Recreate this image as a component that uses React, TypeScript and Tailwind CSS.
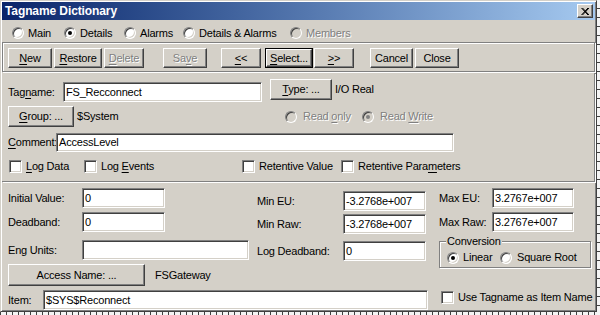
import React from "react";

type Kids = { children?: React.ReactNode };

const raised =
  "border border-t-white border-l-white border-r-[#404040] border-b-[#404040] shadow-[inset_-1px_-1px_0_#808080]";
const sunken =
  "border border-t-[#808080] border-l-[#808080] border-r-white border-b-white shadow-[inset_1px_1px_0_#404040,inset_-1px_-1px_0_#d4d0c8]";
const etched = "border border-[#808080] shadow-[inset_1px_1px_0_#fff,1px_1px_0_#fff]";
const grayText = "text-[#808080] [text-shadow:1px_1px_0_#fff]";

function U({ children }: Kids) {
  return <span className="underline decoration-1 underline-offset-[2px]">{children}</span>;
}

function Btn({
  children,
  className = "",
  disabled = false,
  primary = false,
}: Kids & { className?: string; disabled?: boolean; primary?: boolean }) {
  const face = (
    <div
      className={`flex h-full w-full items-center justify-center bg-[#d4d0c8] ${raised} ${
        disabled ? grayText : "text-black"
      }`}
    >
      {children}
    </div>
  );
  if (primary) return <div className={`shrink-0 border border-black ${className}`}>{face}</div>;
  return <div className={`shrink-0 ${className}`}>{face}</div>;
}

function Field({ value = "", className = "" }: { value?: string; className?: string }) {
  return (
    <div className={`flex shrink-0 items-center bg-white pl-[2px] ${sunken} ${className}`}>
      {value}
    </div>
  );
}

function Radio({ checked = false, disabled = false }: { checked?: boolean; disabled?: boolean }) {
  return (
    <span
      className={`flex h-[12px] w-[12px] shrink-0 items-center justify-center rounded-full border border-t-[#808080] border-l-[#808080] border-r-white border-b-white shadow-[inset_1px_1px_0_#404040,inset_-1px_-1px_0_#d4d0c8] ${
        disabled ? "bg-[#d4d0c8]" : "bg-white"
      }`}
    >
      {checked && (
        <span className={`h-[4px] w-[4px] rounded-full ${disabled ? "bg-[#808080]" : "bg-black"}`} />
      )}
    </span>
  );
}

function Check() {
  return <span className={`h-[13px] w-[13px] shrink-0 bg-white ${sunken}`} />;
}

export default function App() {
  return (
    <div className="flex h-[315px] w-[600px] flex-col overflow-hidden bg-[#d4d0c8] font-['Liberation_Sans',Arial,sans-serif] text-[11px] leading-none tracking-[-0.2px] text-black">
      <div className="flex h-[312px] shrink-0">
        <div className="flex h-full w-[597px] shrink-0 flex-col border border-t-[#d4d0c8] border-l-[#d4d0c8] border-r-[#404040] border-b-[#404040] p-[1px] shadow-[inset_1px_1px_0_#fff,inset_-1px_-1px_0_#808080]">
          {/* title bar */}
          <div className="flex h-[18px] shrink-0 items-center justify-between bg-gradient-to-r from-[#0a246a] to-[#a6caf0] pl-[3px] pr-[2px]">
            <span className="text-[12px] font-bold tracking-[-0.1px] text-white">Tagname Dictionary</span>
            <div className={`flex h-[14px] w-[16px] items-center justify-center bg-[#d4d0c8] ${raised}`}>
              <svg width="8" height="7" viewBox="0 0 8 7">
                <path d="M0.5 0 L7 7 M1.5 0 L8 7 M7 0 L0.5 7 M8 0 L1.5 7" stroke="#000" strokeWidth="1" />
              </svg>
            </div>
          </div>

          {/* view radios */}
          <div className="flex h-[22px] shrink-0 items-center pl-[10px] pt-[4px]">
            <div className="flex w-[52px] items-center gap-[4px]">
              <Radio />
              <span>Main</span>
            </div>
            <div className="flex w-[60px] items-center gap-[4px]">
              <Radio checked />
              <span>Details</span>
            </div>
            <div className="flex w-[59px] items-center gap-[4px]">
              <Radio />
              <span>Alarms</span>
            </div>
            <div className="flex w-[107px] items-center gap-[4px]">
              <Radio />
              <span>Details &amp; Alarms</span>
            </div>
            <div className="flex items-center gap-[4px]">
              <Radio disabled />
              <span className={grayText}>Members</span>
            </div>
          </div>

          {/* toolbar */}
          <div className={`flex h-[30px] shrink-0 items-start pl-[5px] pt-[5px] ${etched}`}>
            <Btn className="h-[20px] w-[44px]">
              <span>
                <U>N</U>ew
              </span>
            </Btn>
            <Btn className="ml-[2px] h-[20px] w-[48px]">
              <span>
                <U>R</U>estore
              </span>
            </Btn>
            <Btn className="ml-[2px] h-[20px] w-[40px]" disabled>
              <span>
                <U>D</U>elete
              </span>
            </Btn>
            <Btn className="ml-[19px] h-[20px] w-[44px]" disabled>
              <span>
                Sa<U>v</U>e
              </span>
            </Btn>
            <Btn className="ml-[14px] h-[20px] w-[40px]">
              <span>
                <U>&lt;</U>&lt;
              </span>
            </Btn>
            <Btn className="ml-[4px] h-[20px] w-[48px]" primary>
              <span>
                <U>S</U>elect...
              </span>
            </Btn>
            <Btn className="ml-[1px] h-[20px] w-[40px]">
              <span>
                <U>&gt;</U>&gt;
              </span>
            </Btn>
            <Btn className="ml-[16px] h-[20px] w-[43px]">
              <span>Cancel</span>
            </Btn>
            <Btn className="ml-[2px] h-[20px] w-[44px]">
              <span>Close</span>
            </Btn>
          </div>

          {/* upper panel */}
          <div className="mt-[1px] flex h-[109px] shrink-0 flex-col border-r border-b border-[#808080] pl-[6px] pt-[6px] shadow-[1px_1px_0_#fff]">
            <div className="flex items-start">
              <span className="mt-[3px] flex h-[20px] w-[55px] items-center">
                Tag<U>n</U>ame:
              </span>
              <Field value="FS_Recconnect" className="mt-[3px] h-[20px] w-[199px]" />
              <Btn className="ml-[8px] h-[21px] w-[62px]">
                <span>
                  <U>T</U>ype: ...
                </span>
              </Btn>
              <span className="ml-[3px] flex h-[21px] items-center">I/O Real</span>
            </div>

            <div className="mt-[4px] flex h-[21px] items-center">
              <Btn className="h-[21px] w-[66px]">
                <span>
                  <U>G</U>roup: ...
                </span>
              </Btn>
              <span className="ml-[3px] w-[208px]">$System</span>
              <div className="flex w-[77px] items-center gap-[6px]">
                <Radio disabled />
                <span className={grayText}>
                  Read <U>o</U>nly
                </span>
              </div>
              <div className="flex items-center gap-[6px]">
                <Radio checked disabled />
                <span className={grayText}>
                  Read <U>W</U>rite
                </span>
              </div>
            </div>

            <div className="mt-[6px] flex h-[19px] items-center">
              <span className="w-[48px]">
                <U>C</U>omment:
              </span>
              <Field value="AccessLevel" className="h-[19px] w-[398px]" />
            </div>

            <div className="mt-[8px] flex h-[13px] items-center pl-[1px]">
              <div className="flex w-[75px] items-center gap-[4px]">
                <Check />
                <span>
                  <U>L</U>og Data
                </span>
              </div>
              <div className="flex w-[158px] items-center gap-[4px]">
                <Check />
                <span>
                  Log <U>E</U>vents
                </span>
              </div>
              <div className="flex w-[99px] items-center gap-[4px]">
                <Check />
                <span>Retentive Value</span>
              </div>
              <div className="flex items-center gap-[4px]">
                <Check />
                <span>
                  Retentive Para<U>m</U>eters
                </span>
              </div>
            </div>
          </div>

          {/* lower panel */}
          <div className="mt-[1px] flex flex-1 pl-[6px] pt-[5px]">
            <div className="flex w-[421px] shrink-0 flex-col">
              <div className="flex">
                <div className="flex w-[241px] shrink-0 flex-col">
                  <div className="flex h-[20px] items-center">
                    <span className="w-[74px]">Initial Value:</span>
                    <Field value="0" className="h-[20px] w-[83px]" />
                  </div>
                  <div className="mt-[4px] flex h-[20px] items-center">
                    <span className="w-[74px]">Deadband:</span>
                    <Field value="0" className="h-[20px] w-[83px]" />
                  </div>
                  <div className="mt-[8px] flex h-[20px] items-center">
                    <span className="w-[74px]">Eng Units:</span>
                    <Field className="h-[20px] w-[167px]" />
                  </div>
                </div>
                <div className="ml-[8px] flex flex-col">
                  <div className="mt-[3px] flex h-[20px] items-center">
                    <span className="w-[86px]">Min EU:</span>
                    <Field value="-3.2768e+007" className="h-[20px] w-[83px]" />
                  </div>
                  <div className="mt-[3px] flex h-[20px] items-center">
                    <span className="w-[86px]">Min Raw:</span>
                    <Field value="-3.2768e+007" className="h-[20px] w-[83px]" />
                  </div>
                  <div className="mt-[7px] flex h-[20px] items-center">
                    <span className="w-[86px]">Log Deadband:</span>
                    <Field value="0" className="h-[20px] w-[83px]" />
                  </div>
                </div>
              </div>

              <div className="mt-[3px] flex h-[22px] items-center">
                <Btn className="h-[22px] w-[137px]">
                  <span>Access Name: ...</span>
                </Btn>
                <span className="ml-[10px]">FSGateway</span>
              </div>

              <div className="mt-[4px] flex h-[20px] items-center">
                <span className="w-[35px]">Item:</span>
                <Field value="$SYS$Reconnect" className="h-[20px] w-[385px]" />
              </div>
            </div>

            <div className="ml-[10px] flex flex-col">
              <div className="flex h-[20px] items-center">
                <span className="w-[53px]">Max EU:</span>
                <Field value="3.2767e+007" className="h-[20px] w-[82px]" />
              </div>
              <div className="mt-[4px] flex h-[20px] items-center">
                <span className="w-[53px]">Max Raw:</span>
                <Field value="3.2767e+007" className="h-[20px] w-[82px]" />
              </div>
              <div className={`relative mt-[9px] flex h-[27px] w-[152px] items-center pl-[7px] pt-[6px] ${etched}`}>
                <span className="absolute left-[6px] top-[-6px] bg-[#d4d0c8] px-[1px]">Conversion</span>
                <div className="flex w-[53px] items-center gap-[4px]">
                  <Radio checked />
                  <span>Linear</span>
                </div>
                <div className="flex items-center gap-[5px]">
                  <Radio />
                  <span>Square Root</span>
                </div>
              </div>
              <div className="mt-[23px] flex h-[13px] items-center gap-[4px] pl-[2px]">
                <Check />
                <span>Use Tagname as Item Name</span>
              </div>
            </div>
          </div>
        </div>

        {/* neighbouring window edge */}
        <div className="h-full flex-1 bg-[repeating-linear-gradient(180deg,#f4f4f4_0_8px,#404040_8px_9px)]" />
      </div>

      {/* ruler strip */}
      <div className="h-[3px] shrink-0 bg-[repeating-linear-gradient(90deg,#404040_0_1px,#f4f4f4_1px_6px)]" />
    </div>
  );
}
